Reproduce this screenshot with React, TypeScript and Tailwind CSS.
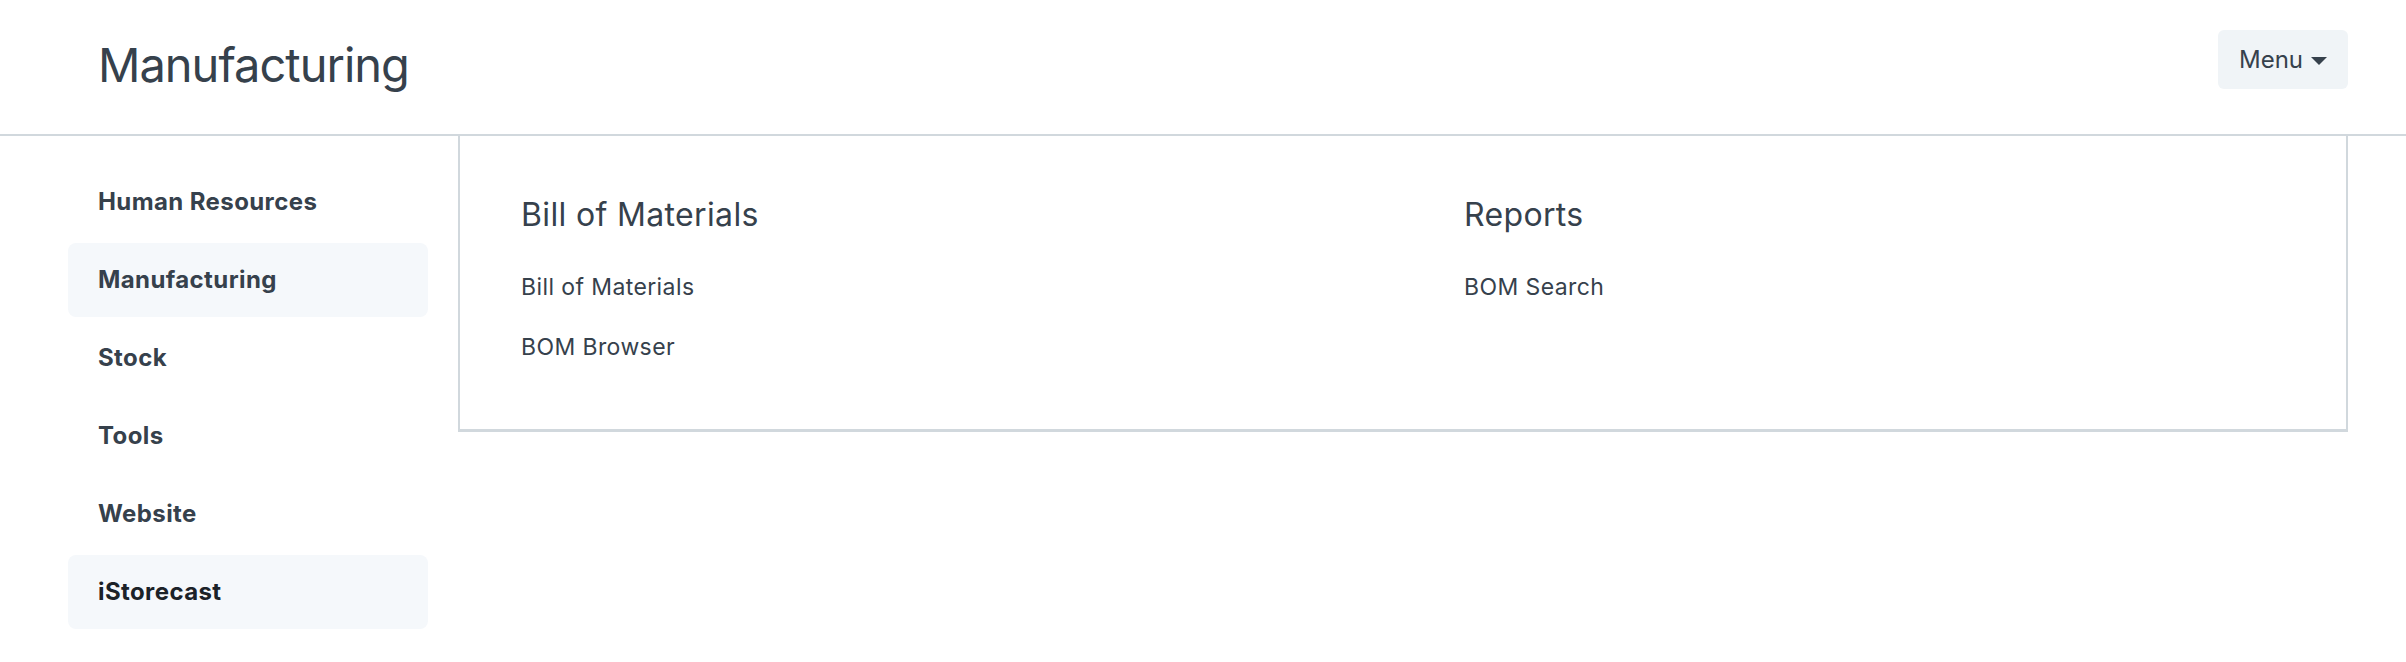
import React from 'react';

const modules = [
  { name: 'Human Resources', active: false },
  { name: 'Manufacturing', active: true },
  { name: 'Stock', active: false },
  { name: 'Tools', active: false },
  { name: 'Website', active: false },
  { name: 'iStorecast', active: true, dark: true },
];

const sections = [
  { title: 'Bill of Materials', links: ['Bill of Materials', 'BOM Browser'] },
  { title: 'Reports', links: ['BOM Search'] },
];

const App: React.FC = () => {
  return (
    <div className="min-h-screen bg-white text-[#36414c]" style={{ fontFamily: 'Inter, "Noto Sans", sans-serif' }}>
      {/* Page header */}
      <header className="h-[136px] border-b-2 border-[#d1d8dd]">
        <div className="flex items-start justify-between pl-[68px] pr-[58px]">
          <h1 className="ml-[30px] mt-[36px] text-[47px] leading-[58px] font-normal tracking-[-1px]">
            Manufacturing
          </h1>
          <button className="mt-[30px] flex h-[59px] w-[130px] items-center justify-center gap-[8px] rounded-[6px] bg-[#f0f4f7] text-[24px] text-[#36414c]">
            <span>Menu</span>
            <svg width="16" height="8" viewBox="0 0 16 8" className="mt-[2px]">
              <path d="M0 0 L16 0 L8 8 Z" fill="#36414c" />
            </svg>
          </button>
        </div>
      </header>

      <div className="flex pl-[68px] pr-[58px]">
        {/* Module sidebar */}
        <nav className="w-[360px] shrink-0 pt-[29px] flex flex-col gap-[4px]">
          {modules.map((m) => (
            <a
              key={m.name}
              href="#"
              className={`flex h-[74px] items-center rounded-[8px] pl-[30px] text-[24px] font-bold tracking-[0.4px] ${
                m.active ? 'bg-[#f5f8fb]' : ''
              } ${m.dark ? 'text-[#1b2228]' : 'text-[#36414c]'}`}
            >
              {m.name}
            </a>
          ))}
        </nav>

        {/* Module page */}
        <main className="ml-[30px] flex-1 self-start border-x-2 border-b-[3px] border-[#d1d8dd] bg-white pt-[59px] pb-[52px]">
          <div className="grid grid-cols-2">
            {sections.map((s) => (
              <div key={s.title} className="pl-[61px]">
                <h3 className="mb-[22px] text-[32px] leading-[40px] font-normal tracking-[0.35px]">{s.title}</h3>
                {s.links.map((l) => (
                  <a key={l} href="#" className="block h-[60px] text-[23px] leading-[60px] tracking-[0.4px]">
                    {l}
                  </a>
                ))}
              </div>
            ))}
          </div>
        </main>
      </div>
    </div>
  );
};

export default App;
